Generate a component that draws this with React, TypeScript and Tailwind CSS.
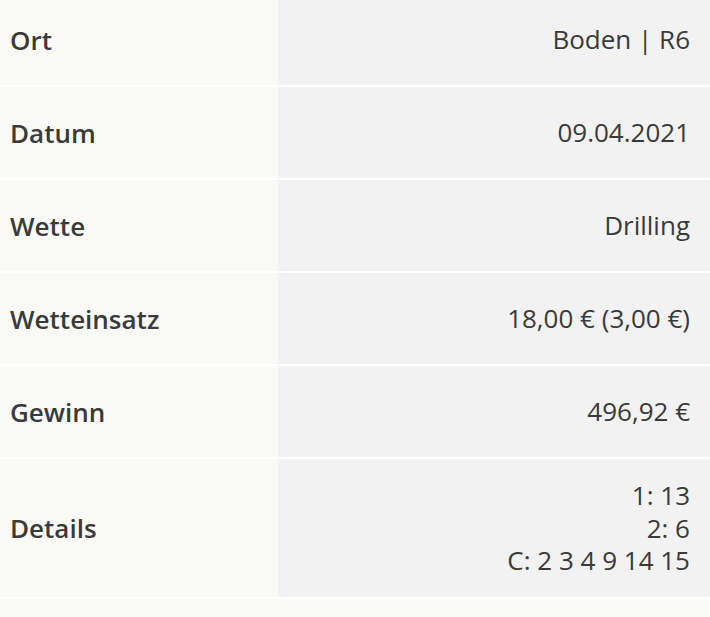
import React from 'react'

const rows: { label: string; value: string[] }[] = [
    { label: 'Ort', value: ['Boden | R6'] },
    { label: 'Datum', value: ['09.04.2021'] },
    { label: 'Wette', value: ['Drilling'] },
    { label: 'Wetteinsatz', value: ['18,00 € (3,00 €)'] },
    { label: 'Gewinn', value: ['496,92 €'] },
    { label: 'Details', value: ['1: 13', '2: 6', 'C: 2 3 4 9 14 15'] },
]

const App: React.FC = () => {
    return (
        <div
            className='min-h-screen w-full bg-[#fafaf6] text-[#3a3a3a] overflow-hidden'
            style={{ fontFamily: '"Open Sans", "Liberation Sans", sans-serif' }}
        >
            <div className='-mt-[6px]'>
                {rows.map(row => (
                    <div key={row.label} className='flex border-b-2 border-white'>
                        {/* Label */}
                        <div className='w-[278px] shrink-0 bg-[#f9faf5] pl-[10px] flex items-center'>
                            <span className='text-[26px] leading-[32px] font-semibold'>{row.label}</span>
                        </div>
                        {/* Value */}
                        <div
                            className={`flex-1 bg-[#f2f2f2] pr-[20px] flex flex-col justify-center items-end text-right text-[26px] leading-[32.5px] ${row.value.length > 1 ? 'h-[138px]' : 'h-[91px]'}`}
                        >
                            {row.value.map(v => (
                                <span key={v}>{v}</span>
                            ))}
                        </div>
                    </div>
                ))}
            </div>
        </div>
    )
}

export default App
